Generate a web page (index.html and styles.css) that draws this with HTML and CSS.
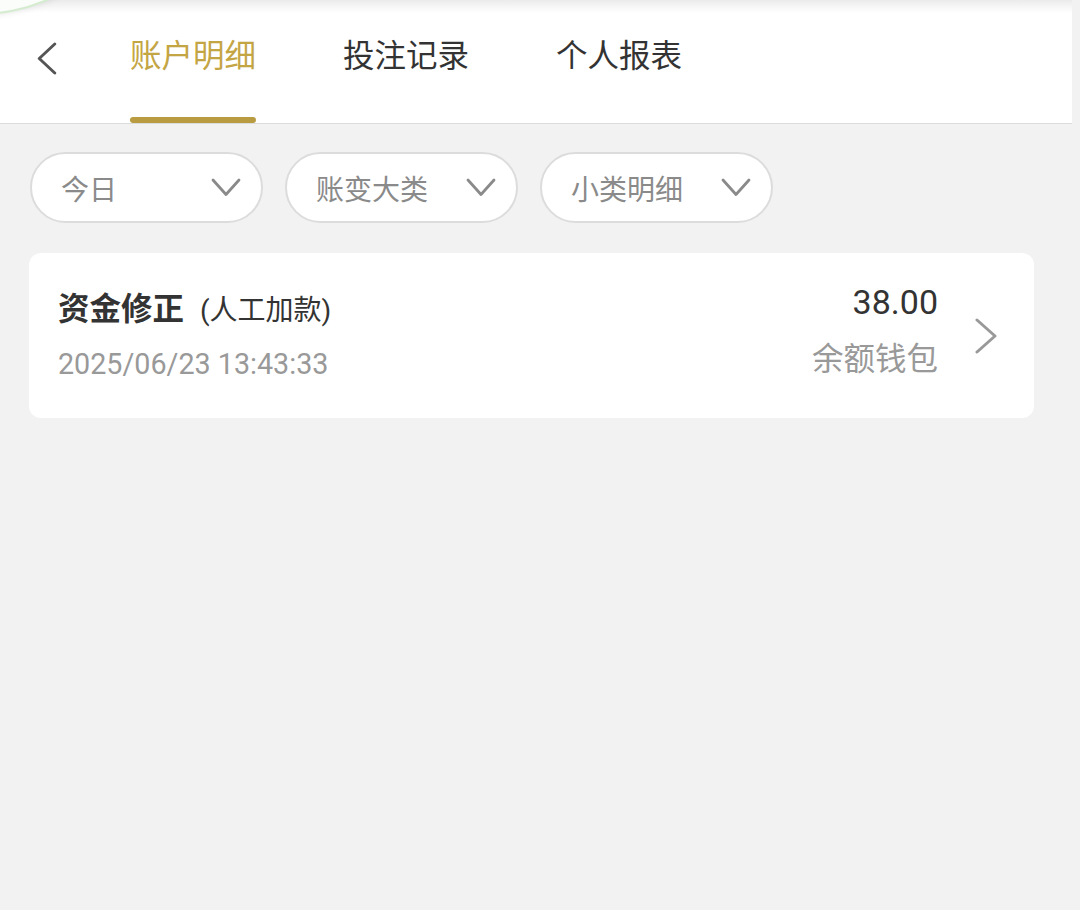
FILE: index.html
```html
<!DOCTYPE html>
<html lang="zh-CN">
<head>
    <meta charset="UTF-8" />
    <title>账户明细</title>
    <link rel="stylesheet" href="styles.css">
</head>
<body>

<!-- floating ball, partly off screen -->
<div class="float-ball"></div>

<div class="page">

    <!-- ===== HEADER / TABS ===== -->
    <header class="topbar">
        <a href="#" class="back" aria-label="返回">
            <svg viewBox="0 0 22 34" fill="none" stroke="currentColor" stroke-width="3" stroke-linecap="round" stroke-linejoin="round">
                <polyline points="19,2 3,17 19,32" />
            </svg>
        </a>
        <nav class="tabs">
            <a href="#" class="tab active"><span class="tab-text">账户明细</span><span class="bar"></span></a>
            <a href="#" class="tab"><span class="tab-text">投注记录</span><span class="bar"></span></a>
            <a href="#" class="tab"><span class="tab-text">个人报表</span><span class="bar"></span></a>
        </nav>
    </header>

    <!-- ===== FILTERS ===== -->
    <div class="filters">
        <button class="pill">
            <span>今日</span>
            <svg viewBox="0 0 30 19" fill="none" stroke="currentColor" stroke-width="2.8" stroke-linecap="round" stroke-linejoin="round"><polyline points="2,2 15,16.5 28,2"/></svg>
        </button>
        <button class="pill">
            <span>账变大类</span>
            <svg viewBox="0 0 30 19" fill="none" stroke="currentColor" stroke-width="2.8" stroke-linecap="round" stroke-linejoin="round"><polyline points="2,2 15,16.5 28,2"/></svg>
        </button>
        <button class="pill">
            <span>小类明细</span>
            <svg viewBox="0 0 30 19" fill="none" stroke="currentColor" stroke-width="2.8" stroke-linecap="round" stroke-linejoin="round"><polyline points="2,2 15,16.5 28,2"/></svg>
        </button>
    </div>

    <!-- ===== RECORDS ===== -->
    <main class="list">
        <a href="#" class="record">
            <div class="rec-left">
                <div class="rec-title"><b>资金修正</b><span class="rec-sub">(人工加款)</span></div>
                <div class="rec-time">2025/06/23 13:43:33</div>
            </div>
            <div class="rec-right">
                <div class="rec-amount">38.00</div>
                <div class="rec-wallet">余额钱包</div>
            </div>
            <svg class="rec-arrow" viewBox="0 0 24 36" fill="none" stroke="currentColor" stroke-width="3" stroke-linecap="round" stroke-linejoin="round">
                <polyline points="3,2 21,18 3,34" />
            </svg>
        </a>
    </main>

</div>
</body>
</html>
```

FILE: styles.css
```css
/* ─────────── Base ─────────── */
* { box-sizing: border-box; }

html, body {
    margin: 0;
    height: 100%;
}
body {
    background: #f2f2f2;
    font-family: "Roboto", "Noto Sans CJK SC", sans-serif;
    color: #333;
    overflow: hidden;
}
a { color: inherit; text-decoration: none; }

.page {
    width: 1072px;
}

/* floating assistive ball in the corner */
.float-ball {
    position: absolute;
    left: -186px;
    top: -319px;
    width: 332px;
    height: 332px;
    border-radius: 50%;
    background: #fbfdfb;
    box-shadow: 0 0 0 2px #d5ecd0, 0 3px 6px rgba(0,0,0,.08);
    z-index: 10;
}

/* ─────────── Header / tabs ─────────── */
.topbar {
    display: flex;
    height: 124px;
    background: linear-gradient(#ebebeb 0, #f6f6f6 7px, #fff 13px);
    border-bottom: 1px solid #dcdcdc;
}
.back {
    width: 130px;
    padding: 42px 0 0 36px;
    color: #555;
}
.back svg {
    width: 22px;
    height: 33px;
    display: block;
}
.tabs {
    display: flex;
    gap: 87px;
}
.tab {
    display: flex;
    flex-direction: column;
    align-items: stretch;
    padding-top: 37px;
    color: #333;
}
.tab-text {
    font-size: 31.5px;
    line-height: 40px;
    white-space: nowrap;
}
.tab .bar {
    margin-top: auto;
    height: 6px;
    border-radius: 3px;
}
.tab.active { color: #c4a544; }
.tab.active .bar { background: #b99b42; }

/* ─────────── Filter pills ─────────── */
.filters {
    display: flex;
    gap: 22px;
    padding: 28px 0 0 30px;
}
.pill {
    width: 233px;
    height: 71px;
    display: flex;
    align-items: center;
    justify-content: space-between;
    padding: 0 20px 0 29px;
    background: #fff;
    border: 2px solid #dcdcdc;
    border-radius: 36px;
    font-family: inherit;
    font-size: 28px;
    color: #8a8a8a;
    cursor: pointer;
}
.pill svg {
    width: 30px;
    height: 19px;
    color: #8a8a8a;
}

/* ─────────── Record cards ─────────── */
.list {
    padding: 30px 38px 0 29px;
}
.record {
    display: flex;
    align-items: center;
    height: 165px;
    padding: 0 36px 0 29px;
    background: #fff;
    border-radius: 12px;
}
.rec-left {
    flex: 1;
    padding-top: 3px;
}
.rec-title {
    line-height: 40px;
    white-space: nowrap;
}
.rec-title b {
    font-size: 31.5px;
    font-weight: 700;
    color: #333;
}
.rec-sub {
    font-size: 28px;
    margin-left: 16px;
    color: #333;
}
.rec-time {
    margin-top: 9px;
    font-size: 28.7px;
    line-height: 40px;
    color: #999;
}
.rec-right {
    text-align: right;
    padding-bottom: 12px;
}
.rec-amount {
    font-size: 34px;
    line-height: 44px;
    color: #333;
}
.rec-wallet {
    margin-top: 16px;
    font-size: 31.5px;
    line-height: 40px;
    color: #999;
}
.rec-arrow {
    width: 24px;
    height: 36px;
    margin-left: 36px;
    color: #999;
}
```
